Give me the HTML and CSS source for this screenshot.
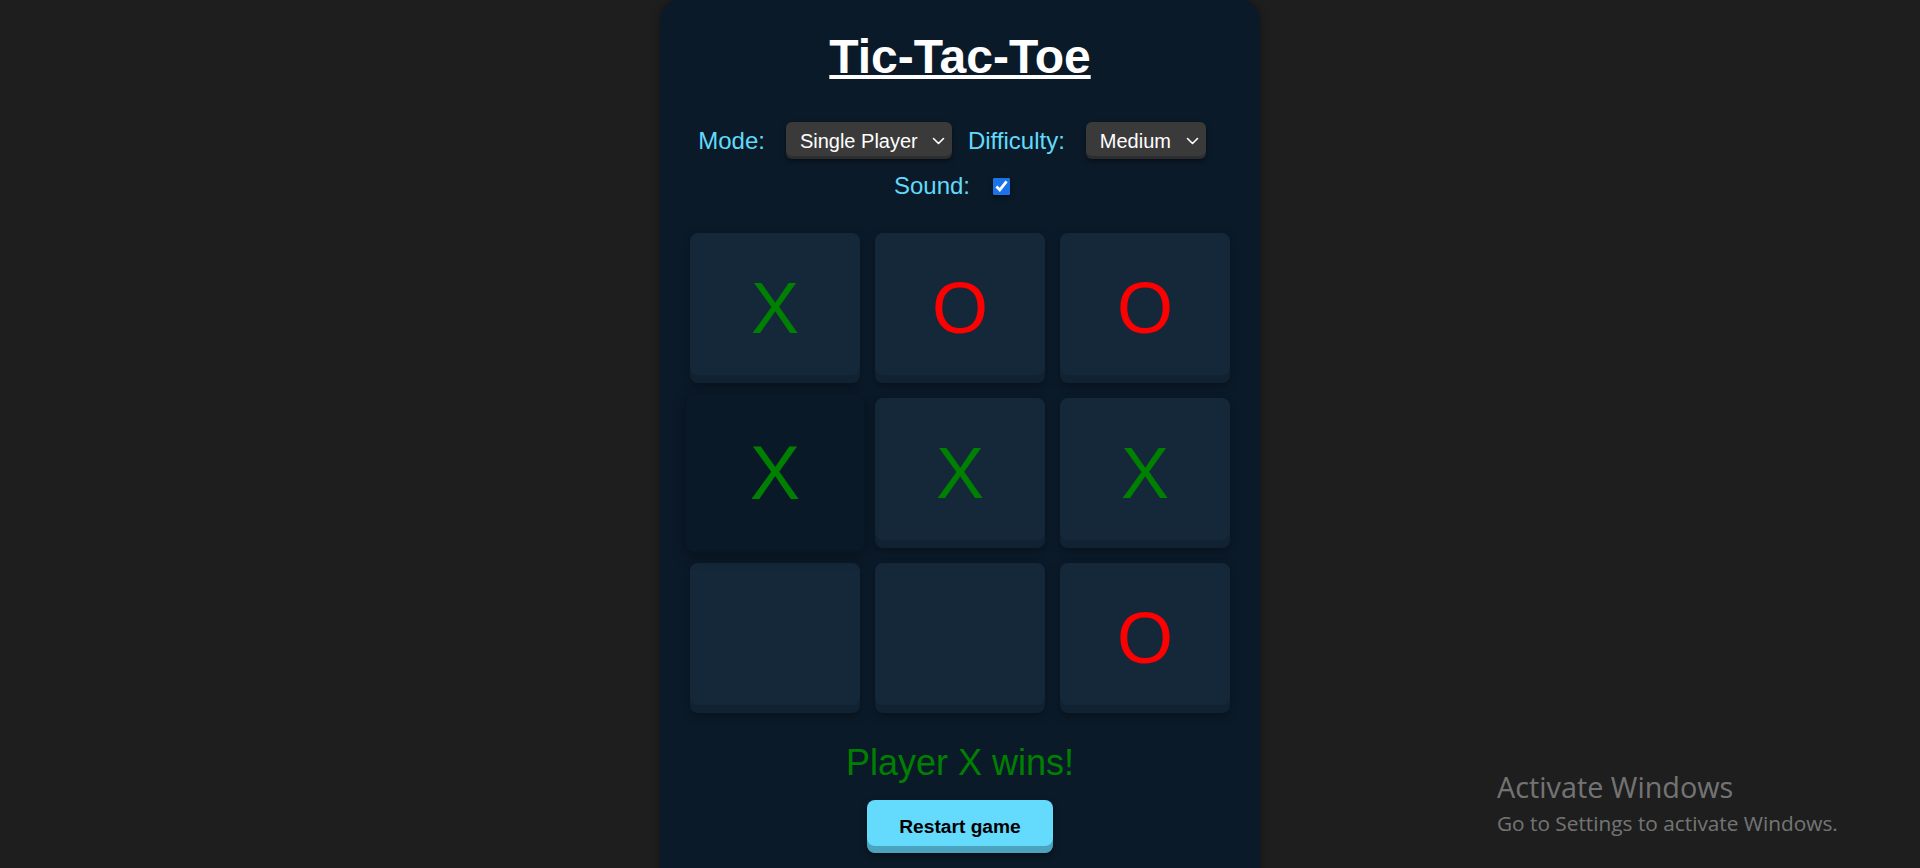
FILE: index.html
```html
<!DOCTYPE html>
<html lang="en">
<head>
<meta charset="utf-8">
<title>Tic-Tac-Toe</title>
<link rel="stylesheet" href="styles.css">
</head>
<body>
  <main class="card">
    <h1 class="title">Tic-Tac-Toe</h1>
    <div class="controls">
      <label class="ctl-label" for="mode">Mode:</label>
      <div class="select-wrap">
        <select id="mode" class="select">
          <option>Single Player</option>
          <option>Two Players</option>
        </select>
        <svg class="chev" width="13" height="8" viewBox="0 0 13 8"><path d="M1.5 1.5 L6.5 6.5 L11.5 1.5" fill="none" stroke="#fff" stroke-width="1.6" stroke-linecap="round" stroke-linejoin="round"/></svg>
      </div>
      <label class="ctl-label" for="diff">Difficulty:</label>
      <div class="select-wrap">
        <select id="diff" class="select">
          <option>Easy</option>
          <option selected>Medium</option>
          <option>Hard</option>
        </select>
        <svg class="chev" width="13" height="8" viewBox="0 0 13 8"><path d="M1.5 1.5 L6.5 6.5 L11.5 1.5" fill="none" stroke="#fff" stroke-width="1.6" stroke-linecap="round" stroke-linejoin="round"/></svg>
      </div>
    </div>
    <div class="controls controls-sound">
      <label class="ctl-label" for="sound">Sound:</label>
      <input id="sound" class="check" type="checkbox" checked>
    </div>
    <div class="board">
      <div class="cell x">X</div>
      <div class="cell o">O</div>
      <div class="cell o">O</div>
      <div class="cell x hover">X</div>
      <div class="cell x">X</div>
      <div class="cell x">X</div>
      <div class="cell"></div>
      <div class="cell"></div>
      <div class="cell o">O</div>
    </div>
    <p class="status">Player X wins!</p>
    <button class="restart">Restart game</button>
  </main>
  <div class="watermark">
    <div class="wm-title">Activate Windows</div>
    <div class="wm-sub">Go to Settings to activate Windows.</div>
  </div>
</body>
</html>
```

FILE: styles.css
```css
html, body {
  margin: 0;
  height: 100%;
  overflow: hidden;
}

body {
  background: #1e1e1e;
  font-family: "Liberation Sans", Arial, sans-serif;
  display: flex;
  justify-content: center;
  align-items: flex-start;
}

.card {
  width: 600px;
  box-sizing: border-box;
  padding: 30px 30px 40px;
  background: #0b1a29;
  border-radius: 20px;
  box-shadow: 0 0 8px rgba(0, 0, 0, 0.35);
  display: flex;
  flex-direction: column;
  align-items: center;
}

.title {
  margin: 0;
  font-size: 48px;
  line-height: 54px;
  font-weight: bold;
  color: #ffffff;
  text-decoration: underline;
  text-decoration-thickness: 4px;
  text-underline-offset: 2px;
}

.controls {
  margin-top: 38px;
  height: 37px;
  display: flex;
  align-items: center;
  justify-content: center;
}

.controls-sound {
  margin-top: 14px;
  height: 26px;
}

.ctl-label {
  color: #61dafb;
  font-size: 24px;
  margin-right: 21px;
}

.select-wrap {
  position: relative;
  margin-right: 16px;
  display: flex;
}

.select {
  appearance: none;
  -webkit-appearance: none;
  height: 37px;
  padding: 0 34px 0 14px;
  border: none;
  border-radius: 6px;
  background: #3a3a3a;
  color: #ffffff;
  font-family: "Liberation Sans", Arial, sans-serif;
  font-size: 20px;
  box-shadow: inset 0 -3px 0 rgba(0, 0, 0, 0.22), 0 2px 5px rgba(0, 0, 0, 0.45);
  outline: none;
}

.chev {
  position: absolute;
  right: 7px;
  top: 15px;
  pointer-events: none;
}

.check {
  width: 17px;
  height: 17px;
  margin: 0 16px 0 2px;
  accent-color: #1a73e8;
  box-shadow: 0 2px 4px rgba(0, 0, 0, 0.5);
}

.board {
  margin-top: 34px;
  display: grid;
  grid-template-columns: repeat(3, 170px);
  grid-template-rows: repeat(3, 150px);
  gap: 15px;
}

.cell {
  background: #14283a;
  border-radius: 8px;
  box-shadow: inset 0 -8px 0 rgba(0, 0, 0, 0.13), 0 3px 8px rgba(0, 0, 0, 0.3);
  display: flex;
  align-items: center;
  justify-content: center;
  font-size: 72px;
  line-height: 1;
}

.cell.x { color: #008000; }
.cell.o { color: #ff0000; }

.cell.hover {
  background: #0a1928;
  transform: scale(1.05);
  box-shadow: 0 4px 12px rgba(0, 0, 0, 0.35);
}

.status {
  margin: 29px 0 0;
  font-size: 36px;
  line-height: 42px;
  color: #008000;
}

.restart {
  margin-top: 16px;
  height: 53px;
  padding: 0 32px;
  border: none;
  border-radius: 8px;
  background: #64dbfc;
  color: #000000;
  font-family: "Liberation Sans", Arial, sans-serif;
  font-weight: bold;
  font-size: 19.2px;
  box-shadow: inset 0 -7px 0 rgba(0, 0, 0, 0.25), 0 3px 6px rgba(0, 0, 0, 0.4);
}

.watermark {
  position: absolute;
  left: 1497px;
  top: 769px;
  font-family: "Open Sans", "Noto Sans", sans-serif;
  color: rgba(255, 255, 255, 0.4);
}

.wm-title {
  font-size: 28.8px;
  line-height: 36px;
}

.wm-sub {
  font-size: 20.8px;
  line-height: 28px;
  margin-top: 4px;
}
```
